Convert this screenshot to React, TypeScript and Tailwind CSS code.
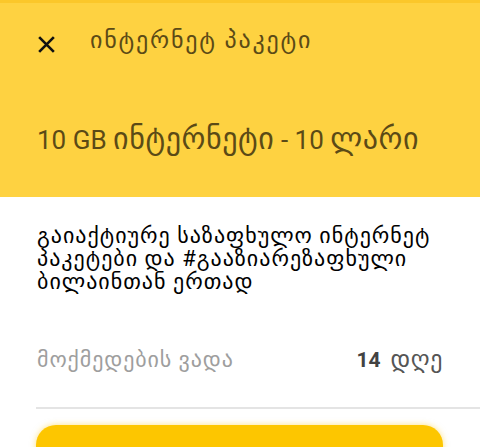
import React from "react";

export default function App() {
  return (
    <div
      className="w-[480px] h-[447px] overflow-hidden bg-white relative"
      style={{ fontFamily: 'Roboto, "DejaVu Sans", sans-serif' }}
    >
      <div className="h-[3px] bg-[#fbc72a]" />
      <div className="h-[194px] bg-[#fed241] flex flex-col">
        <div className="flex items-center h-[78px] pl-[36px] pt-[4px]">
          <svg width="21" height="21" viewBox="0 0 20 20" className="shrink-0">
            <path d="M3 3 L17 17 M17 3 L3 17" stroke="#111" strokeWidth="2.5" strokeLinecap="butt" />
          </svg>
          <span className="ml-[33px] -mt-[9px] text-[24px] tracking-[1.8px] text-[#5b4a16] leading-none">ინტერნეტ პაკეტი</span>
        </div>
        <div className="pl-[37px] mt-[43px] text-[26px] text-[#5b4a16] leading-none flex items-baseline">
          <span>10 GB&nbsp;</span>
          <span className="text-[30px] tracking-[0.6px]">ინტერნეტი</span>
          <span>&nbsp;-&nbsp;10&nbsp;</span>
          <span className="text-[30px] tracking-[0.6px]">ლარი</span>
        </div>
      </div>
      <div className="px-[37px]">
        <p className="mt-[27px] text-[22px] tracking-[1px] leading-[23px] text-black">
          გაიაქტიურე საზაფხულო ინტერნეტ პაკეტები და #გააზიარეზაფხული ბილაინთან ერთად
        </p>
        <div className="flex items-center justify-between mt-[48px]">
          <span className="text-[22px] tracking-[0.9px] text-[#9e9e9e]">მოქმედების ვადა</span>
          <span className="flex items-baseline gap-[10px]">
            <span className="text-[21px] font-bold text-[#424242]">14</span>
            <span className="text-[24px] tracking-[0.6px] text-[#555]">დღე</span>
          </span>
        </div>
      </div>
      <div className="ml-[36px] mt-[30px] h-[2px] bg-[#e4e4e4]" />
      <div className="ml-[36px] mr-[37px] mt-[16px] h-[60px] rounded-[20px] bg-[#fdc600] shadow-[0_0_6px_rgba(253,198,0,0.5)] flex items-start justify-center pt-[20px]">
        <span className="text-[22px] text-[#222]">ყიდვა</span>
      </div>
    </div>
  );
}
